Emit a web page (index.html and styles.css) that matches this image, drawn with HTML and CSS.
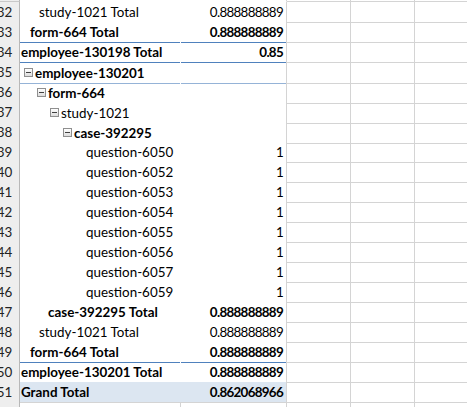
FILE: index.html
```html
<!DOCTYPE html>
<html>
<head>
<meta charset="utf-8">
<link rel="stylesheet" href="styles.css">
</head>
<body>
<div class="sheet">
  <div class="row partial-top"><div class="rh"></div><div class="b"></div><div class="c"></div><div class="g"></div><div class="g"></div><div class="g"></div></div>

  <div class="row"><div class="rh">32</div><div class="b"><span class="lbl t-study">study-1021 Total</span></div><div class="c">0.888888889</div><div class="g"></div><div class="g"></div><div class="g"></div></div>
  <div class="row bold line-dark"><div class="rh">33</div><div class="b"><span class="lbl t-form">form-664 Total</span></div><div class="c">0.888888889</div><div class="g"></div><div class="g"></div><div class="g"></div></div>
  <div class="row bold line-dark"><div class="rh">34</div><div class="b"><span class="lbl t-emp">employee-130198 Total</span></div><div class="c">0.85</div><div class="g"></div><div class="g"></div><div class="g"></div></div>
  <div class="row bold line-light"><div class="rh">35</div><div class="b"><span class="lbl h-emp"><i class="tog"></i>employee-130201</span></div><div class="c"></div><div class="g"></div><div class="g"></div><div class="g"></div></div>
  <div class="row bold"><div class="rh">36</div><div class="b"><span class="lbl h-form"><i class="tog"></i>form-664</span></div><div class="c"></div><div class="g"></div><div class="g"></div><div class="g"></div></div>
  <div class="row"><div class="rh">37</div><div class="b"><span class="lbl h-study"><i class="tog"></i>study-1021</span></div><div class="c"></div><div class="g"></div><div class="g"></div><div class="g"></div></div>
  <div class="row bold"><div class="rh">38</div><div class="b"><span class="lbl h-case"><i class="tog"></i>case-392295</span></div><div class="c"></div><div class="g"></div><div class="g"></div><div class="g"></div></div>
  <div class="row"><div class="rh">39</div><div class="b"><span class="lbl q">question-6050</span></div><div class="c">1</div><div class="g"></div><div class="g"></div><div class="g"></div></div>
  <div class="row"><div class="rh">40</div><div class="b"><span class="lbl q">question-6052</span></div><div class="c">1</div><div class="g"></div><div class="g"></div><div class="g"></div></div>
  <div class="row"><div class="rh">41</div><div class="b"><span class="lbl q">question-6053</span></div><div class="c">1</div><div class="g"></div><div class="g"></div><div class="g"></div></div>
  <div class="row"><div class="rh">42</div><div class="b"><span class="lbl q">question-6054</span></div><div class="c">1</div><div class="g"></div><div class="g"></div><div class="g"></div></div>
  <div class="row"><div class="rh">43</div><div class="b"><span class="lbl q">question-6055</span></div><div class="c">1</div><div class="g"></div><div class="g"></div><div class="g"></div></div>
  <div class="row"><div class="rh">44</div><div class="b"><span class="lbl q">question-6056</span></div><div class="c">1</div><div class="g"></div><div class="g"></div><div class="g"></div></div>
  <div class="row"><div class="rh">45</div><div class="b"><span class="lbl q">question-6057</span></div><div class="c">1</div><div class="g"></div><div class="g"></div><div class="g"></div></div>
  <div class="row"><div class="rh">46</div><div class="b"><span class="lbl q">question-6059</span></div><div class="c">1</div><div class="g"></div><div class="g"></div><div class="g"></div></div>
  <div class="row bold"><div class="rh">47</div><div class="b"><span class="lbl t-case">case-392295 Total</span></div><div class="c">0.888888889</div><div class="g"></div><div class="g"></div><div class="g"></div></div>
  <div class="row"><div class="rh">48</div><div class="b"><span class="lbl t-study">study-1021 Total</span></div><div class="c">0.888888889</div><div class="g"></div><div class="g"></div><div class="g"></div></div>
  <div class="row bold line-dark"><div class="rh">49</div><div class="b"><span class="lbl t-form">form-664 Total</span></div><div class="c">0.888888889</div><div class="g"></div><div class="g"></div><div class="g"></div></div>
  <div class="row bold line-light"><div class="rh">50</div><div class="b"><span class="lbl t-emp">employee-130201 Total</span></div><div class="c">0.888888889</div><div class="g"></div><div class="g"></div><div class="g"></div></div>
  <div class="row bold grand"><div class="rh">51</div><div class="b"><span class="lbl t-emp">Grand Total</span></div><div class="c">0.862068966</div><div class="g"></div><div class="g"></div><div class="g"></div></div>
  <div class="row empty"><div class="rh"></div><div class="b"></div><div class="c"></div><div class="g"></div><div class="g"></div><div class="g"></div></div>
</div>
</body>
</html>
```

FILE: styles.css
```css
html, body {
  margin: 0;
  padding: 0;
  background: #ffffff;
  overflow: hidden;
}

.sheet {
  margin-left: -10px;
  font-family: "Lato", "Liberation Sans", sans-serif;
  font-size: 13.4px;
  color: #000000;
}

.row {
  display: grid;
  grid-template-columns: 30px 161px 106px 64px 64px 64px;
  height: 20px;
}

.row > div {
  box-sizing: border-box;
  border-bottom: 1px solid #ffffff;
  border-right: 1px solid #ffffff;
  white-space: nowrap;
  line-height: 20px;
}

.row > .rh {
  background: #eeeeee;
  border-right-color: #b8b8b8;
  border-bottom-color: #c9c9c9;
  text-align: center;
  color: #222222;
  font-weight: 400;
}

.row > .g {
  border-right-color: #d4d4d4;
  border-bottom-color: #d4d4d4;
}

.row > .c {
  border-right-color: #d4d4d4;
  text-align: right;
  padding-right: 3px;
  letter-spacing: -0.7px;
}

.row > .b {
  position: relative;
  z-index: 1;
}

.bold .b, .bold .c {
  font-weight: 700;
}

.lbl {
  display: inline-flex;
  align-items: center;
}

.t-emp { padding-left: 1px; }
.t-form { padding-left: 10px; }
.t-study { padding-left: 19px; }
.t-case { padding-left: 28px; }
.q { padding-left: 66px; }
.h-emp { padding-left: 4px; }
.h-form { padding-left: 17px; }
.h-study { padding-left: 30px; }
.h-case { padding-left: 43px; }

.tog {
  display: inline-block;
  position: relative;
  box-sizing: border-box;
  width: 9px;
  height: 9px;
  margin-right: 2px;
  border: 1px solid #8f8f8f;
  background: linear-gradient(#ffffff, #dcdcdc);
}

.tog::after {
  content: "";
  position: absolute;
  left: 1px;
  top: 3px;
  width: 5px;
  height: 1px;
  background: #404040;
}

.partial-top {
  height: 2px;
}
.partial-top > div {
  height: 2px;
  line-height: 1px;
}
.partial-top > .b, .partial-top > .c {
  border-bottom-color: #ffffff;
}

.line-dark > .b, .line-dark > .c {
  border-bottom-color: #4f81bd;
}

.line-light > .b, .line-light > .c {
  border-bottom-color: #95b3d7;
}

.grand > .b, .grand > .c {
  background: #dce6f1;
  border-right-color: #dce6f1;
  border-bottom-color: #d4d4d4;
}
.grand > .c {
  border-right-color: #d4d4d4;
}

.empty > .b {
  border-right-color: #d4d4d4;
}
```
